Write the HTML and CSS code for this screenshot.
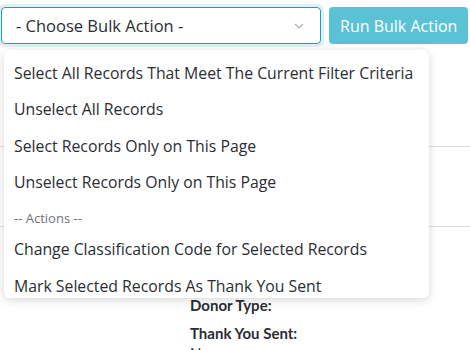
FILE: index.html
```html
<!DOCTYPE html>
<html lang="en">
  <head>
    <meta charset="UTF-8" />
    <meta name="viewport" content="width=device-width, initial-scale=1.0" />
    <link rel="stylesheet" href="styles.css">
    <title>Bulk Actions</title>
  </head>
  <body>
    <div class="bulk-bar">
      <div class="bulk-select">
        <span>- Choose Bulk Action -</span>
        <svg class="chevron" width="10" height="6" viewBox="0 0 10 6">
          <path d="M1 1l4 4 4-4" fill="none" stroke="#aab0b8" stroke-width="1.2" />
        </svg>
      </div>
      <button class="btn-run">Run Bulk Action</button>

      <ul class="bulk-menu">
        <li class="menu-item">Select All Records That Meet The Current Filter Criteria</li>
        <li class="menu-item">Unselect All Records</li>
        <li class="menu-item">Select Records Only on This Page</li>
        <li class="menu-item">Unselect Records Only on This Page</li>
        <li class="menu-group">-- Actions --</li>
        <li class="menu-item">Change Classification Code for Selected Records</li>
        <li class="menu-item">Mark Selected Records As Thank You Sent</li>
      </ul>
    </div>

    <div class="record-list">
      <div class="record-row first"></div>
      <div class="record-row second"></div>
      <dl class="record-info">
        <dt>Donor Type:</dt>
        <dd></dd>
        <dt>Thank You Sent:</dt>
        <dd>No</dd>
      </dl>
    </div>
  </body>
</html>
```

FILE: styles.css
```css
* {
  margin: 0;
  padding: 0;
  box-sizing: border-box;
}

body {
  font-family: "Open Sans", Lato, sans-serif;
  color: #2b2d33;
  background: #fff;
  overflow: hidden;
}

.bulk-bar {
  position: relative;
  display: flex;
  gap: 8px;
  padding: 7px 0 0 1px;
}

.bulk-select {
  flex-shrink: 0;
  display: flex;
  align-items: center;
  justify-content: space-between;
  width: 320px;
  height: 37px;
  padding: 0 14px;
  border: 1px solid #17a2b8;
  border-radius: 4px;
  box-shadow: 0 0 0 3px rgba(23, 162, 184, 0.15);
  font-size: 16.5px;
}

.chevron {
  margin-right: 2px;
}

.btn-run {
  flex-shrink: 0;
  height: 37px;
  padding: 0 11px;
  border: none;
  border-radius: 4px;
  background: #5bc2d6;
  color: #fff;
  font-family: inherit;
  font-size: 16px;
  white-space: nowrap;
}

.bulk-menu {
  position: absolute;
  top: 50px;
  left: 4px;
  width: 425px;
  height: 248px;
  overflow: hidden;
  list-style: none;
  padding-top: 4.5px;
  background: #fff;
  border-radius: 6px;
  box-shadow: 0 2px 10px rgba(0, 0, 0, 0.16);
  z-index: 10;
}

.menu-item {
  height: 36.67px;
  line-height: 36.67px;
  padding-left: 10px;
  font-size: 15.8px;
  white-space: nowrap;
}

.menu-group {
  height: 30px;
  line-height: 26px;
  padding: 4px 0 0 10px;
  font-size: 13px;
  color: #6c757d;
}

.record-row {
  border-bottom: 1px solid #dcdcdc;
}

.record-row.first {
  height: 103px;
}

.record-row.second {
  height: 80px;
}

.record-info {
  padding: 68px 0 0 190px;
  font-family: Lato, "Open Sans", sans-serif;
  font-size: 15px;
}

.record-info dt {
  font-weight: bold;
  line-height: 20px;
}

.record-info dd {
  min-height: 8px;
  line-height: 20px;
}
```
